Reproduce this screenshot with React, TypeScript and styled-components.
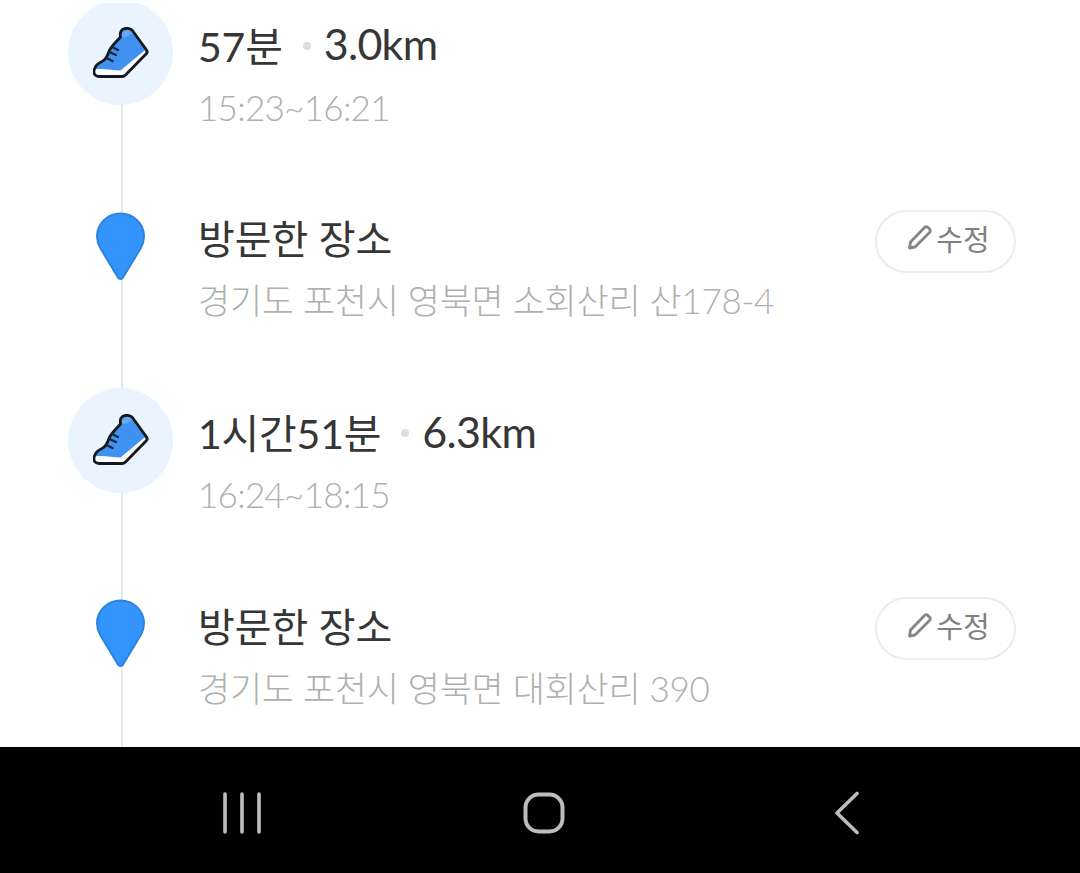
import React from "react";
import styled, { createGlobalStyle } from "styled-components";

const GlobalStyle = createGlobalStyle`
  html, body {
    margin: 0;
    padding: 0;
    background: #fff;
  }
`;

const Page = styled.div`
  width: 1080px;
  height: 873px;
  display: flex;
  flex-direction: column;
  overflow: hidden;
  font-family: Lato, "Noto Sans CJK KR", sans-serif;
`;

const Timeline = styled.div`
  flex: 1;
  margin-top: 3px;
  overflow: hidden;
`;

const Rows = styled.div`
  margin-top: -3px;
`;

const Row = styled.div`
  height: 193.75px;
  display: flex;
  padding: 0 64px 0 68px;
  box-sizing: border-box;
`;

const Rail = styled.div`
  width: 105px;
  flex-shrink: 0;
  background: linear-gradient(#e3e8ec, #e3e8ec) calc(50% + 1px) 0 / 2px 100% no-repeat;
`;

const Marker = styled.div<{ $round?: boolean }>`
  width: 105px;
  height: 105px;
  display: flex;
  align-items: center;
  justify-content: center;
  border-radius: 50%;
  background: ${(p) => (p.$round ? "#eaf4fe" : "transparent")};
`;

const Body = styled.div`
  flex: 1;
  margin-left: 25px;
  padding-top: 18.5px;
`;

const Title = styled.div`
  display: flex;
  align-items: center;
  height: 50px;
  font-size: 40px;
  color: #363636;
`;

const Duration = styled.span`
  font-size: 41px;
  letter-spacing: -0.2px;
`;

const Distance = styled.span`
  font-size: 43px;
  letter-spacing: -0.7px;
`;

const Dot = styled.span`
  width: 8px;
  height: 8px;
  margin: 4px 13px 0 20px;
  border-radius: 50%;
  background: #dedede;
`;

const Sub = styled.div<{ $address?: boolean }>`
  margin-top: 16px;
  height: 44px;
  line-height: 44px;
  font-size: 35px;
  font-weight: 300;
  color: #b0b0b0;
  letter-spacing: ${(p) => (p.$address ? "-0.3px" : "-0.7px")};
`;

const EditButton = styled.button`
  width: 141px;
  height: 63px;
  margin-top: 16px;
  padding: 0 0 7px 6px;
  display: flex;
  align-items: center;
  justify-content: center;
  gap: 4px;
  flex-shrink: 0;
  box-sizing: border-box;
  border: 2px solid #ececec;
  border-radius: 32px;
  background: #fff;
  font-family: inherit;
  font-size: 29px;
  color: #808080;
`;

const NavBar = styled.div`
  height: 126px;
  flex-shrink: 0;
  box-sizing: border-box;
  display: flex;
  justify-content: center;
  padding: 6px 0 0 8px;
  background: #000;
`;

const NavSlot = styled.div`
  width: 302px;
  display: flex;
  align-items: center;
  justify-content: center;
`;

const shoeOutline =
  "M120.5 37C119.5 32 121.5 29 125.5 28.5C129 28 132 29.5 133.5 32L146.5 50C147.5 51.5 147.5 52.5 146.5 53.5L125.5 75C124.5 76 123.5 76.5 122 76.5H99C95.5 76.5 93.5 74 94 71C94.5 67 97.5 63.5 102 61.5C106 59.5 107.5 56 109 51.5C110 47.5 115.5 42.5 120.5 37Z";

const ShoeIcon = () => (
  <svg width="56" height="52" viewBox="93 27 56 52">
    <path d={shoeOutline} fill="#3f92f2" />
    <path d="M120.5 37C119.5 32 121.5 29 125.5 28.5C129 28 132 29.5 133.5 32C130 36 125 38 120.5 37Z" fill="#62a8f6" />
    <path d="M94.5 69.5C103 68 113 70.5 120.5 70.5L144.5 50.5L146.5 53.5L125.5 75C124.5 76 123.5 76.5 122 76.5H99C95.5 76.5 93.5 74 94.5 69.5Z" fill="#fff" />
    <path d={shoeOutline} fill="none" stroke="#16181c" strokeWidth="2.8" strokeLinejoin="round" />
    <path
      d="M112 47L118 50M109.5 52L116 55M106.5 58L112.5 61"
      fill="none"
      stroke="#1d2530"
      strokeWidth="2.2"
      strokeLinecap="round"
    />
  </svg>
);

const PinIcon = () => (
  <svg width="51" height="69" viewBox="0 0 51 69">
    <path
      d="M25.5 1.5C12.5 1.5 2 11.5 2 24.5C2 29 3.2 32.5 5.5 36.5L23 65.5C24.2 67.5 26.8 67.5 28 65.5L45.5 36.5C47.8 32.5 49 29 49 24.5C49 11.5 38.5 1.5 25.5 1.5Z"
      fill="#3394fc"
      stroke="#2b82e0"
      strokeWidth="2"
    />
  </svg>
);

const PencilIcon = () => (
  <svg width="25" height="25" viewBox="0 0 25 25" fill="none">
    <path
      d="M17.5 2.5C18.5 1.5 20 1.5 21 2.5L22.5 4C23.5 5 23.5 6.5 22.5 7.5L8 22L2.5 23L3.5 17Z"
      stroke="#858585"
      strokeWidth="2.8"
      strokeLinejoin="round"
    />
  </svg>
);

const RecentsIcon = () => (
  <svg width="40" height="42" viewBox="0 0 40 42" fill="none" stroke="#bdbdbd" strokeWidth="3.6" strokeLinecap="round">
    <path d="M3 2V40M20 2V40M37 2V40" />
  </svg>
);

const HomeIcon = () => (
  <svg width="42" height="42" viewBox="0 0 42 42" fill="none">
    <rect x="2.5" y="2.5" width="37" height="37" rx="13" stroke="#bdbdbd" strokeWidth="4" />
  </svg>
);

const BackIcon = () => (
  <svg width="26" height="44" viewBox="0 0 26 44" fill="none" stroke="#bdbdbd" strokeWidth="3.6" strokeLinecap="round" strokeLinejoin="round">
    <path d="M24 2.5L4 22L24 41.5" />
  </svg>
);

type Entry =
  | { kind: "walk"; duration: string; distance: string; time: string }
  | { kind: "place"; address: string };

const entries: Entry[] = [
  { kind: "walk", duration: "57분", distance: "3.0km", time: "15:23~16:21" },
  { kind: "place", address: "경기도 포천시 영북면 소회산리 산178-4" },
  { kind: "walk", duration: "1시간51분", distance: "6.3km", time: "16:24~18:15" },
  { kind: "place", address: "경기도 포천시 영북면 대회산리 390" },
];

export default function App() {
  return (
    <Page>
      <GlobalStyle />
      <Timeline>
        <Rows>
          {entries.map((entry, i) => (
            <Row key={i}>
              <Rail>
                <Marker $round={entry.kind === "walk"}>
                  {entry.kind === "walk" ? <ShoeIcon /> : <PinIcon />}
                </Marker>
              </Rail>
              {entry.kind === "walk" ? (
                <Body>
                  <Title>
                    <Duration>{entry.duration}</Duration>
                    <Dot />
                    <Distance>{entry.distance}</Distance>
                  </Title>
                  <Sub>{entry.time}</Sub>
                </Body>
              ) : (
                <>
                  <Body>
                    <Title>방문한 장소</Title>
                    <Sub $address>{entry.address}</Sub>
                  </Body>
                  <EditButton>
                    <PencilIcon />
                    수정
                  </EditButton>
                </>
              )}
            </Row>
          ))}
        </Rows>
      </Timeline>
      <NavBar>
        <NavSlot>
          <RecentsIcon />
        </NavSlot>
        <NavSlot>
          <HomeIcon />
        </NavSlot>
        <NavSlot>
          <BackIcon />
        </NavSlot>
      </NavBar>
    </Page>
  );
}
